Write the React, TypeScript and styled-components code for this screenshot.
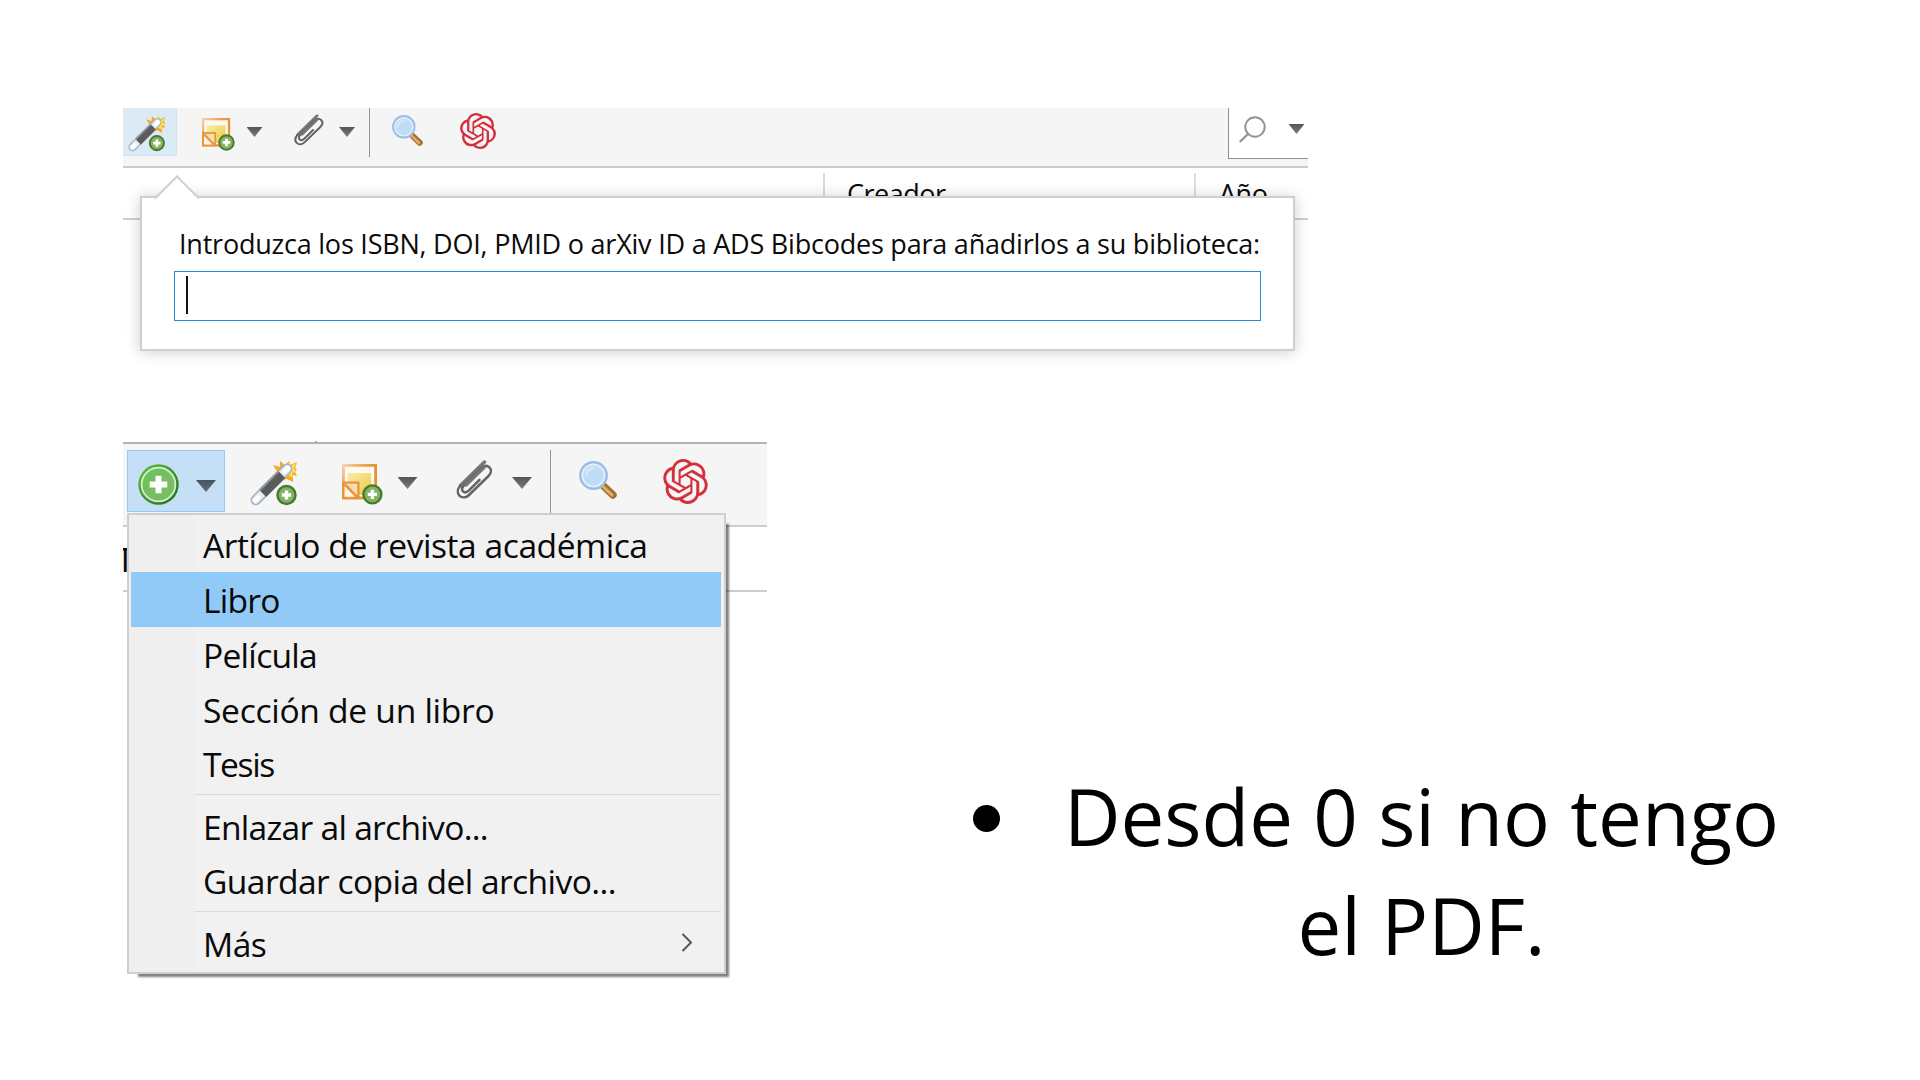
import React from "react";
import styled, { createGlobalStyle, css } from "styled-components";
import { SiOpenai } from "react-icons/si";

const GlobalStyle = createGlobalStyle`
  * { box-sizing: border-box; }
  body { margin: 0; background: #fff; overflow: hidden; }
`;

const uiFont = css`
  font-family: "Open Sans", "Noto Sans", sans-serif;
  color: #0a0a0a;
  white-space: nowrap;
`;

const Slide = styled.main`
  width: 1920px;
  height: 1080px;
  padding: 108px 0 0 123px;
  background: #fff;
  overflow: hidden;
`;

/* ---------- shared toolbar parts ---------- */

const Item = styled.span<{ $ml: number; $mt: number }>`
  display: flex;
  flex: none;
  margin: ${(p) => p.$mt}px 0 0 ${(p) => p.$ml}px;

  svg { display: block; }
`;

const Caret = styled.span<{ $w: number; $h: number; $color?: string }>`
  width: ${(p) => p.$w}px;
  height: ${(p) => p.$h}px;
  background: ${(p) => p.$color ?? "linear-gradient(#555, #7c7c7c)"};
  clip-path: polygon(0 0, 100% 0, 50% 100%);
`;

const Divider = styled.span<{ $ml: number; $mt: number; $h: number }>`
  flex: none;
  width: 1.5px;
  height: ${(p) => p.$h}px;
  margin: ${(p) => p.$mt}px 0 0 ${(p) => p.$ml}px;
  background: #939393;
`;

/* ---------- identifier lookup panel ---------- */

const LookupPanel = styled.section`
  position: relative;
  width: 1185px;
  height: 334px;
`;

const LookupToolbar = styled.div`
  display: flex;
  align-items: flex-start;
  height: 60px;
  background: #f5f5f5;
  border-bottom: 2px solid #cdcdcd;
`;

const WandButton = styled.div`
  display: flex;
  flex: none;
  width: 54px;
  height: 48px;
  background: #dceaf6;
  border: solid #cbe4f8;
  border-width: 0 1px 1px 0;
`;

const SearchBox = styled.div`
  display: flex;
  align-items: flex-start;
  width: 80px;
  height: 51px;
  margin-left: auto;
  background: #fff;
  border: solid #8f8f8f;
  border-width: 0 0 1.5px 1.5px;
`;

const ColumnHeader = styled.div`
  display: flex;
  height: 52px;
  padding: 5px 0 0 700px;
  border-bottom: 2px solid #cdcdcd;
`;

const Column = styled.div<{ $w: number; $pad: number }>`
  ${uiFont}
  width: ${(p) => p.$w}px;
  height: 42px;
  padding-left: ${(p) => p.$pad}px;
  border-left: 2px solid #dcdcdc;
  font-size: 27px;
  line-height: 42px;
  letter-spacing: -0.5px;
`;

const Popover = styled.div`
  position: absolute;
  left: 17px;
  top: 88px;
  width: 1155px;
  height: 154.5px;
  padding: 27px 32px 0 32px;
  background: #fff;
  border: 2px solid #cfcfcf;
  box-shadow: 0 1px 14px rgba(0, 0, 0, 0.2);
`;

const PopoverArrow = styled.svg`
  position: absolute;
  left: 12px;
  top: -23px;
`;

const PopoverLabel = styled.label`
  ${uiFont}
  display: block;
  padding-left: 5px;
  font-size: 27px;
  line-height: 37px;
  letter-spacing: -0.22px;
`;

const IdentifierField = styled.div`
  display: flex;
  width: 1087px;
  height: 50px;
  margin-top: 9px;
  padding: 4px 0 0 11px;
  border: 1.5px solid #2b8ad8;
`;

const TextCaret = styled.span`
  width: 2.4px;
  height: 38px;
  background: #111;
`;

/* ---------- new item panel ---------- */

const LowerRow = styled.div`
  display: flex;
  align-items: flex-start;
`;

const NewItemPanel = styled.section`
  position: relative;
  flex: none;
  width: 644px;
  height: 540px;
`;

const HeaderTick = styled.i`
  position: absolute;
  left: 192px;
  top: -1px;
  width: 2px;
  height: 2px;
  background: #aaa;
`;

const NewItemToolbar = styled.div`
  display: flex;
  align-items: flex-start;
  height: 85px;
  background: #f5f5f5;
  border-top: 2px solid #b3b3b3;
  border-bottom: 2px solid #cdcdcd;
`;

const AddButton = styled.div`
  display: flex;
  flex: none;
  width: 98px;
  height: 62px;
  margin: 6px 0 0 4px;
  background: #c5e0f6;
  border: 1.5px solid #93cbf8;
`;

const TitleHeader = styled.div`
  ${uiFont}
  height: 65px;
  overflow: hidden;
  border-bottom: 2px solid #cdcdcd;
  font-size: 33.6px;
  line-height: 64px;
  text-indent: -7px;
`;

const Menu = styled.ul`
  ${uiFont}
  position: absolute;
  left: 4px;
  top: 71px;
  width: 599px;
  height: 461px;
  margin: 0;
  padding: 2.5px 3px 2.5px 2px;
  list-style: none;
  font-size: 33.6px;
  background: linear-gradient(90deg, #efefef 66px, #f1f1f1 66px);
  border: 2px solid #cfcfcf;
  box-shadow: 7px 7px 2px -4px rgba(0, 0, 0, 0.5);
`;

const MenuItem = styled.li<{ $active?: boolean; $tracking: number }>`
  display: flex;
  align-items: center;
  justify-content: space-between;
  height: 54.75px;
  padding: 2px 28px 0 72px;
  line-height: 53px;
  letter-spacing: ${(p) => p.$tracking}px;
  background: ${(p) => (p.$active ? "#91c9f7" : "transparent")};

  svg { margin-top: -4px; }
`;

const MenuSeparator = styled.li`
  height: 7.5px;
  margin-left: 63.5px;
  padding-top: 2.5px;

  &::before {
    content: "";
    display: block;
    height: 1.5px;
    background: #d9d9d9;
  }
`;

/* ---------- slide text ---------- */

const Bullets = styled.ul`
  margin: 320px 0 0 206px;
  padding: 0;
  list-style: none;
`;

const Bullet = styled.li`
  display: flex;
  font-family: "Open Sans", sans-serif;
  font-size: 78px;
  line-height: 109.2px;
  color: #000;
  text-align: center;
  white-space: nowrap;

  &::before {
    content: "";
    width: 27px;
    height: 27px;
    margin: 43px 56px 0 0;
    border-radius: 50%;
    background: #000;
  }
`;

const BulletText = styled.span`
  width: 731px;
`;

/* ---------- icons ---------- */

const PlusBadge = ({ cx, cy }: { cx: number; cy: number }) => (
  <g>
    <circle cx={cx} cy={cy} r="9" fill="#84b463" stroke="#47792f" strokeWidth="2.4" />
    <path d={`M${cx - 4.6} ${cy}h9.2M${cx} ${cy - 4.6}v9.2`} stroke="#fff" strokeWidth="3.4" />
  </g>
);

const WandIcon = ({ width }: { width: number }) => (
  <svg width={width} viewBox="0 0 48 45">
    <path
      d="M23 4l7 2 0-6 5 4 4-4 1 4 7-3-2 6 2 1-2 3 2 4-4-1 0 7-6-3-5 1-2-7-4-3z"
      fill="#f9a825"
    />
    <path d="M33 4l4-1 3-2 1 4 5-3-2 5 2 4-4 1 1 5-5-3z" fill="#fde24a" />
    <path d="M5.8 39L37.2 7.8" stroke="#a3b4c4" strokeWidth="10.6" strokeLinecap="round" />
    <path d="M5.8 39L37.2 7.8" stroke="#e6edf3" strokeWidth="7.4" strokeLinecap="round" />
    <path d="M12.5 32.2L31.5 13.4" stroke="#8f959b" strokeWidth="10.4" />
    <path d="M13.3 32.8L32.2 14" stroke="#5b5b5b" strokeWidth="8.2" />
    <path d="M5.5 39.3l2.6-2.6M35 10l2.8-2.8" stroke="#fff" strokeWidth="4.6" strokeLinecap="round" />
    <PlusBadge cx={36.5} cy={34} />
  </svg>
);

const NoteIcon = ({ width, id }: { width: number; id: string }) => (
  <svg width={width} viewBox="0 0 41 41">
    <defs>
      <linearGradient id={id} x1="0" y1="0" x2="1" y2="1">
        <stop offset="0" stopColor="#f8ecae" />
        <stop offset="1" stopColor="#eccb3f" />
      </linearGradient>
      <linearGradient id={`${id}-edge`} x1="0" y1="0" x2="1" y2="1">
        <stop offset="0" stopColor="#f6cfa6" />
        <stop offset="0.45" stopColor="#ea9238" />
        <stop offset="1" stopColor="#ea922c" />
      </linearGradient>
    </defs>
    <rect x="1.4" y="1.4" width="32.2" height="32.6" fill="#fffaf0" stroke={`url(#${id}-edge)`} strokeWidth="2.8" />
    <rect x="5.6" y="9" width="23.6" height="22" fill={`url(#${id})`} />
    <rect x="1.4" y="18.6" width="15" height="15.4" fill="#f9dfae" stroke="#ea9238" strokeWidth="2.2" />
    <path d="M2.8 21V32.6H14z" fill="#fff6e2" />
    <path d="M2.8 20.4l12.4 12.8" stroke="#e8933f" strokeWidth="2.6" />
    <PlusBadge cx={30.4} cy={30.4} />
  </svg>
);

const ClipIcon = ({ width }: { width: number }) => (
  <svg width={width} viewBox="0 0 37 39.5" fill="none" strokeLinecap="round" strokeLinejoin="round">
    <path d="M28.5 2L4.5 25.5" stroke="#757575" strokeWidth="3.4" />
    <path
      d="M4.5 25.5C1.2 29 1 33 3.4 35.6C6 38.2 10 37.8 13 35L32.5 16C35.5 13 35.6 9.6 33.4 7.4C31.2 5.3 28 5.6 25.2 8.4L8.2 25.2C5.8 27.8 5.6 30 7 31.4C8.4 32.8 10.8 32.4 13 30.3L23.5 19.8"
      stroke="#636363"
      strokeWidth="2.5"
    />
    <path d="M28 7.5L10 25" stroke="#757575" strokeWidth="3.2" />
  </svg>
);

const MagnifierIcon = ({ width }: { width: number }) => (
  <svg width={width} viewBox="0 0 38 38">
    <path d="M24.5 25L34 34" stroke="#a9712c" strokeWidth="7.4" strokeLinecap="round" />
    <path d="M23.5 25L33 34" stroke="#dcae78" strokeWidth="3" strokeLinecap="round" />
    <circle cx="14.5" cy="14.5" r="13.2" fill="#e3effb" stroke="#9dbce6" strokeWidth="2.4" />
    <circle cx="14.5" cy="14.5" r="10.2" fill="#bfdcf6" />
    <path d="M7 15a8 8 0 0 1 8-8" stroke="#d3e7fa" strokeWidth="3" fill="none" />
  </svg>
);

const SearchIcon = () => (
  <svg width="27" height="27" viewBox="0 0 27 27" fill="none" stroke="#939393" strokeWidth="2" strokeLinecap="round">
    <circle cx="16" cy="11" r="9.7" />
    <path d="M9 18L1.5 25.3" strokeWidth="2.3" />
  </svg>
);

const AddIcon = () => (
  <svg width="41" height="41" viewBox="0 0 41 41">
    <defs>
      <linearGradient id="add-ring" x1="0" y1="0" x2="1" y2="1">
        <stop offset="0" stopColor="#5cc43f" />
        <stop offset="1" stopColor="#1f6a1c" />
      </linearGradient>
      <linearGradient id="add-face" x1="0" y1="0" x2="1" y2="1">
        <stop offset="0" stopColor="#6cc25c" />
        <stop offset="1" stopColor="#7fba68" />
      </linearGradient>
    </defs>
    <circle cx="20.5" cy="20.5" r="20.2" fill="url(#add-ring)" />
    <circle cx="20.5" cy="20.5" r="16.9" fill="url(#add-face)" stroke="#d5efc9" strokeWidth="1.8" />
    <path d="M11.7 20.5h17.6M20.5 11.7v17.6" stroke="#fff" strokeWidth="6" />
  </svg>
);

const ChevronIcon = () => (
  <svg width="12" height="19" viewBox="0 0 12 19" fill="none" stroke="#555" strokeWidth="2">
    <path d="M1.5 1L10 9.5L1.5 18" />
  </svg>
);

/* ---------- content ---------- */

type Entry = { label: string; tracking: number; active?: boolean; submenu?: boolean } | null;

const entries: Entry[] = [
  { label: "Artículo de revista académica", tracking: -0.46 },
  { label: "Libro", tracking: -0.75, active: true },
  { label: "Película", tracking: -0.72 },
  { label: "Sección de un libro", tracking: -0.29 },
  { label: "Tesis", tracking: -1.4 },
  null,
  { label: "Enlazar al archivo...", tracking: -0.72 },
  { label: "Guardar copia del archivo...", tracking: -0.58 },
  null,
  { label: "Más", tracking: -0.5, submenu: true },
];

export default function App() {
  return (
    <>
      <GlobalStyle />
      <Slide>
        <LookupPanel>
          <LookupToolbar>
            <WandButton>
              <Item $ml={4.5} $mt={5}><WandIcon width={38} /></Item>
            </WandButton>
            <Item $ml={25} $mt={9.5}><NoteIcon width={33} id="note-small" /></Item>
            <Item $ml={11.5} $mt={19}><Caret $w={16} $h={10} /></Item>
            <Item $ml={31} $mt={6}><ClipIcon width={30} /></Item>
            <Item $ml={15.5} $mt={19}><Caret $w={16} $h={10} /></Item>
            <Divider $ml={13.5} $mt={0} $h={49} />
            <Item $ml={22} $mt={7}><MagnifierIcon width={31} /></Item>
            <Item $ml={37} $mt={5}><SiOpenai size={36} color="#d32f3c" /></Item>
            <SearchBox>
              <Item $ml={10} $mt={8}><SearchIcon /></Item>
              <Item $ml={22.5} $mt={16}><Caret $w={16} $h={10} /></Item>
            </SearchBox>
          </LookupToolbar>
          <ColumnHeader>
            <Column $w={371} $pad={22}>Creador</Column>
            <Column $w={113} $pad={23}>Año</Column>
          </ColumnHeader>
          <Popover>
            <PopoverArrow width="46" height="25" viewBox="0 0 46 25">
              <path d="M1 23.5L23 1.5L45 23.5V25H1Z" fill="#fff" />
              <path d="M1 23.5L23 1.5L45 23.5" fill="none" stroke="#cfcfcf" strokeWidth="2" />
            </PopoverArrow>
            <PopoverLabel>
              Introduzca los ISBN, DOI, PMID o arXiv ID a ADS Bibcodes para añadirlos a su biblioteca:
            </PopoverLabel>
            <IdentifierField>
              <TextCaret />
            </IdentifierField>
          </Popover>
        </LookupPanel>

        <LowerRow>
          <NewItemPanel>
            <HeaderTick />
            <NewItemToolbar>
              <AddButton>
                <Item $ml={10} $mt={13}><AddIcon /></Item>
                <Item $ml={17} $mt={29}><Caret $w={20} $h={12} $color="linear-gradient(#45535f, #5f707d)" /></Item>
              </AddButton>
              <Item $ml={24.5} $mt={16.5}><WandIcon width={48} /></Item>
              <Item $ml={44.5} $mt={20}><NoteIcon width={41} id="note-large" /></Item>
              <Item $ml={14.5} $mt={33}><Caret $w={20} $h={12} /></Item>
              <Item $ml={38} $mt={16}><ClipIcon width={37} /></Item>
              <Item $ml={19.5} $mt={33}><Caret $w={20} $h={12} /></Item>
              <Divider $ml={17.5} $mt={6} $h={64} />
              <Item $ml={28} $mt={17}><MagnifierIcon width={38} /></Item>
              <Item $ml={46} $mt={15}><SiOpenai size={45} color="#d32f3c" /></Item>
            </NewItemToolbar>
            <TitleHeader>Título</TitleHeader>
            <Menu>
              {entries.map((entry, i) =>
                entry ? (
                  <MenuItem key={i} $active={entry.active} $tracking={entry.tracking}>
                    {entry.label}
                    {entry.submenu && <ChevronIcon />}
                  </MenuItem>
                ) : (
                  <MenuSeparator key={i} />
                )
              )}
            </Menu>
          </NewItemPanel>

          <Bullets>
            <Bullet>
              <BulletText>
                Desde 0 si no tengo
                <br />
                el PDF.
              </BulletText>
            </Bullet>
          </Bullets>
        </LowerRow>
      </Slide>
    </>
  );
}
